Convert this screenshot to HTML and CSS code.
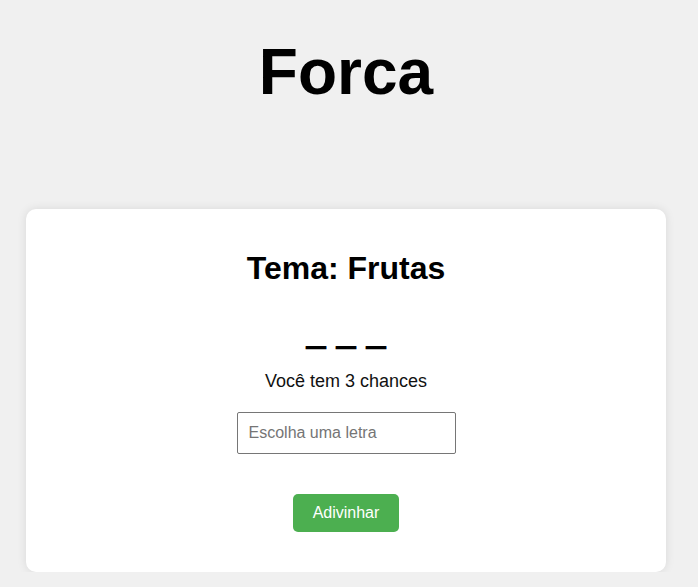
FILE: index.html
```html
<!DOCTYPE html>
<html lang="pt">
<head>
<meta charset="utf-8">
<title>Forca</title>
<link rel="stylesheet" href="styles.css">
</head>
<body>
<main class="page">
  <h1 class="title">Forca</h1>
  <section class="card">
    <h2 class="theme">Tema: Frutas</h2>
    <p class="word">_ _ _</p>
    <p class="chances">Você tem 3 chances</p>
    <input class="guess" type="text" placeholder="Escolha uma letra">
    <button class="btn" type="button">Adivinhar</button>
  </section>
</main>
</body>
</html>
```
FILE: styles.css
```css
html, body {
  margin: 0;
  padding: 0;
}
body {
  background: #f0f0f0;
  font-family: "Liberation Sans", Arial, sans-serif;
  color: #000;
}
.page {
  display: flex;
  flex-direction: column;
  align-items: center;
  padding-right: 6px;
}
.title {
  font-size: 64px;
  line-height: 74px;
  font-weight: bold;
  margin: 35px 0 100px;
}
.card {
  box-sizing: border-box;
  width: 640px;
  background: #fff;
  border-radius: 10px;
  box-shadow: 0 0 10px rgba(0, 0, 0, 0.1);
  padding: 20px 20px 40px;
  display: flex;
  flex-direction: column;
  align-items: center;
}
.theme {
  font-size: 32px;
  line-height: 37px;
  font-weight: bold;
  margin: 21px 0 0;
}
.word {
  font-size: 36px;
  line-height: 41px;
  font-weight: bold;
  margin: 23px 0 0;
  text-shadow: 0 1px 0 #000, 0 2px 0 #000;
}
.chances {
  font-size: 18px;
  line-height: 21px;
  margin: 20px 0 0;
  color: #111;
}
.guess {
  box-sizing: border-box;
  width: 219px;
  height: 42px;
  margin-top: 20px;
  padding: 0 11px;
  font-family: "Liberation Sans", Arial, sans-serif;
  font-size: 16px;
  border: 1px solid #767676;
  border-radius: 2px;
  background: #fff;
}
.guess::placeholder {
  color: #757575;
}
.btn {
  box-sizing: border-box;
  height: 38px;
  margin-top: 40px;
  padding: 0 20px;
  font-family: "Liberation Sans", Arial, sans-serif;
  font-size: 16px;
  color: #fff;
  background: #4caf50;
  border: none;
  border-radius: 5px;
  cursor: pointer;
}
```
